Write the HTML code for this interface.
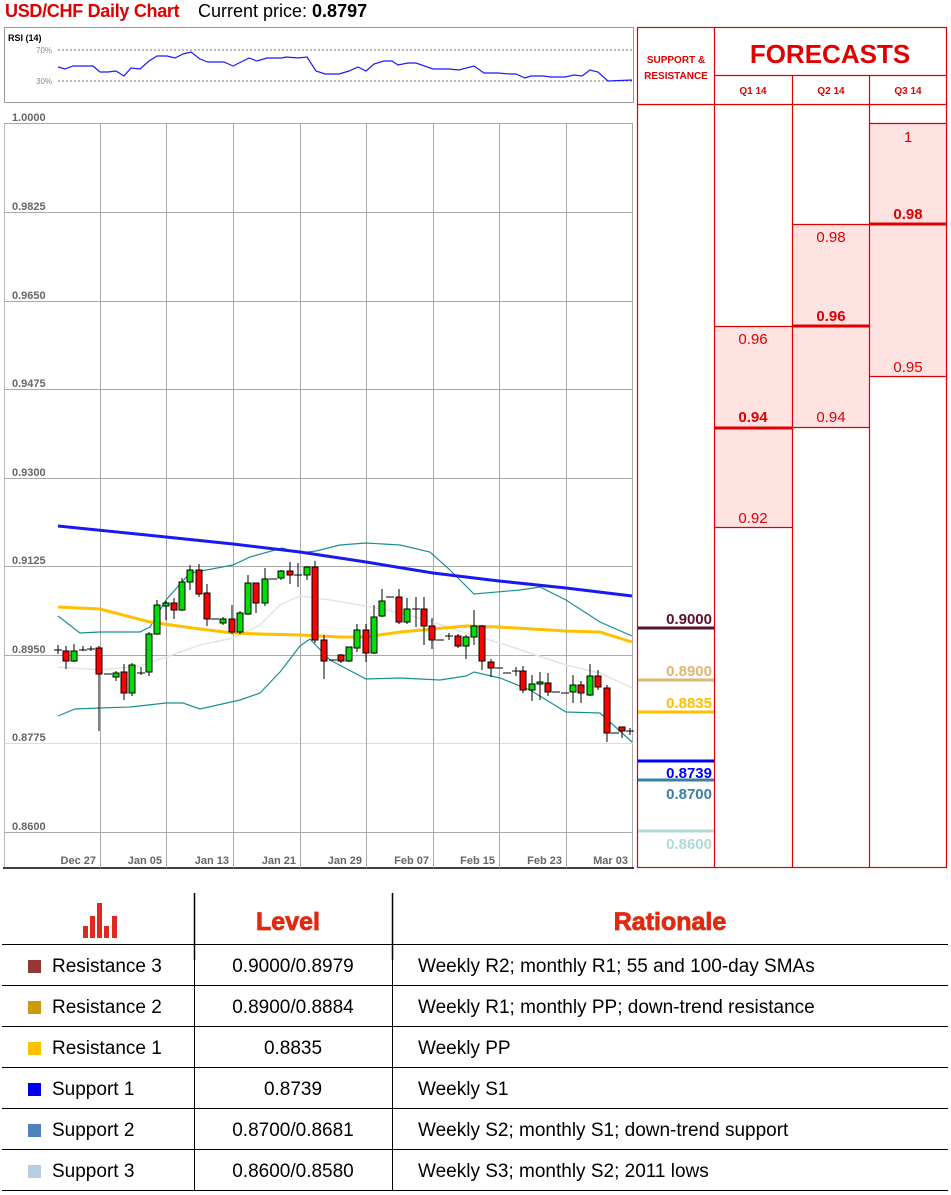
<!DOCTYPE html>
<html><head><meta charset="utf-8"><style>
*{margin:0;padding:0;box-sizing:border-box}
body{width:951px;height:1195px;background:#fff;position:relative;overflow:hidden;font-family:"Liberation Sans",sans-serif}
.a{position:absolute}
.row{position:absolute;left:2px;width:946px;height:41px;border-bottom:1.5px solid #000;font-size:19px;color:#000}
.row div{position:absolute;top:11px}
.sq{width:13px;height:13px;left:26px;top:15px!important}
</style></head><body>
<div class="a" style="left:5px;top:1px;font-size:18px;font-weight:bold;color:#e00000;letter-spacing:-0.3px">USD/CHF Daily Chart</div>
<div class="a" style="left:198px;top:1px;font-size:18px;color:#000">Current price: <b>0.8797</b></div>

<svg class="a" style="left:0;top:0" width="951" height="870">
<rect x="4.5" y="27.5" width="629" height="75" fill="none" stroke="#999"/>
<text x="8" y="41" font-size="9" font-weight="bold" fill="#000" font-family="Liberation Sans">RSI (14)</text>
<line x1="58" y1="50" x2="633" y2="50" stroke="#777" stroke-dasharray="2,2"/>
<line x1="58" y1="81" x2="633" y2="81" stroke="#777" stroke-dasharray="2,2"/>
<text x="36" y="53" font-size="8" fill="#888">70%</text>
<text x="36" y="84" font-size="8" fill="#888">30%</text>
<polyline fill="none" stroke="#1a1aff" stroke-width="1.2" points="58,67 65,69 73,66 93,66 100,72 108,72 116,71 124,76 131,68 140,69 149,61 157,56 167,56 175,58 183,54 191,52 200,59 208,62 224,62 233,66 241,62 249,58 257,61 267,58 282,58 286,57 298,58 307,57 316,71 325,74 339,74 349,71 358,67 366,71 374,64 384,61 392,61 398,65 408,63 416,63 433,69 445,69 449,69 459,70 474,66 484,73 498,73 510,74 516,74 525,78 531,76 543,76 551,77 565,77 574,75 582,76 590,70 598,72 608,81 632,80"/>
<line x1="4.5" y1="123" x2="4.5" y2="868" stroke="#bbb"/>
<line x1="632.5" y1="123" x2="632.5" y2="868" stroke="#aaa"/>
<line x1="3" y1="868" x2="634" y2="868" stroke="#000" stroke-width="1.5"/>
<g stroke="#aaa" stroke-width="1">
<line x1="4" y1="123.5" x2="633" y2="123.5"/><line x1="4" y1="212.5" x2="633" y2="212.5"/><line x1="4" y1="301.5" x2="633" y2="301.5"/><line x1="4" y1="389.5" x2="633" y2="389.5"/><line x1="4" y1="478.5" x2="633" y2="478.5"/><line x1="4" y1="566.5" x2="633" y2="566.5"/><line x1="4" y1="655.5" x2="633" y2="655.5"/><line x1="4" y1="743.5" x2="633" y2="743.5" stroke="#ddd"/><line x1="4" y1="832.5" x2="633" y2="832.5"/>
<line x1="100.5" y1="123" x2="100.5" y2="868"/><line x1="166.5" y1="123" x2="166.5" y2="868"/><line x1="233.5" y1="123" x2="233.5" y2="868"/><line x1="300.5" y1="123" x2="300.5" y2="868"/><line x1="366.5" y1="123" x2="366.5" y2="868"/><line x1="433.5" y1="123" x2="433.5" y2="868"/><line x1="499.5" y1="123" x2="499.5" y2="868"/><line x1="566.5" y1="123" x2="566.5" y2="868"/>
</g>
<g font-size="11" font-weight="bold" fill="#666" font-family="Liberation Sans">
<text x="12" y="121">1.0000</text><text x="12" y="210">0.9825</text><text x="12" y="299">0.9650</text><text x="12" y="387">0.9475</text><text x="12" y="476">0.9300</text><text x="12" y="564">0.9125</text><text x="12" y="653">0.8950</text><text x="12" y="741">0.8775</text><text x="12" y="830">0.8600</text>
</g>
<g font-size="11" font-weight="bold" fill="#666" font-family="Liberation Sans" text-anchor="end">
<text x="96" y="864">Dec 27</text><text x="162" y="864">Jan 05</text><text x="229" y="864">Jan 13</text><text x="296" y="864">Jan 21</text><text x="362" y="864">Jan 29</text><text x="429" y="864">Feb 07</text><text x="495" y="864">Feb 15</text><text x="562" y="864">Feb 23</text><text x="628" y="864">Mar 03</text>
</g>
<polyline fill="none" stroke="#e4e4e4" stroke-width="1.5" points="58,667 100,670 140,666 166,657 200,645 233,638 260,625 280,605 300,596 330,600 366,606 400,613 433,622 466,633 500,643 533,654 566,665 600,673 632,688"/>
<polyline fill="none" stroke="#1a9090" stroke-width="1.2" points="58,616 80,633 100,632 140,632 150,627 166,600 190,573 233,565 250,557 282,548 300,553 316,551 340,545 366,543 400,545 430,552 450,570 474,594 520,590 540,587 566,600 600,622 632,636"/>
<polyline fill="none" stroke="#1a9090" stroke-width="1.2" points="58,716 75,709 100,708 130,707 166,703 183,703 200,709 240,700 260,693 280,672 300,646 310,639 330,660 366,679 400,678 440,680 466,676 474,672 500,678 530,690 566,712 600,713 632,742"/>
<polyline fill="none" stroke="#ffc000" stroke-width="3" points="58,607 100,609 150,622 200,629 233,633 260,634 300,635 340,637 366,637 400,632 433,629 466,626 499,627 566,631 600,632 632,642"/>
<polyline fill="none" stroke="#1a1aee" stroke-width="3" points="58,526 166,537 233,544 300,552 366,562 433,573 499,581 566,588 632,596"/>
<g stroke="#000" stroke-width="1">
<line x1="58" y1="645" x2="58" y2="654"/><line x1="54" y1="650" x2="62" y2="650"/>
<line x1="66" y1="646" x2="66" y2="669"/><rect x="63" y="651" width="6" height="10" fill="#f00"/>
<line x1="74" y1="644" x2="74" y2="662"/><rect x="71" y="651" width="6" height="10" fill="#0d0"/>
<line x1="83" y1="646" x2="83" y2="651"/><line x1="79" y1="650" x2="87" y2="650"/>
<line x1="91" y1="646" x2="91" y2="651"/><line x1="87" y1="649" x2="95" y2="649"/>
<line x1="99" y1="646" x2="99" y2="731"/><rect x="96" y="648" width="6" height="26" fill="#f00"/>
<line x1="104" y1="674" x2="112" y2="674"/>
<line x1="116" y1="671" x2="116" y2="681"/><rect x="113" y="673" width="6" height="4" fill="#0d0"/>
<line x1="124" y1="664" x2="124" y2="700"/><rect x="121" y="672" width="6" height="21" fill="#f00"/>
<line x1="132" y1="663" x2="132" y2="696"/><rect x="129" y="665" width="6" height="28" fill="#0d0"/>
<line x1="141" y1="667" x2="141" y2="675"/><line x1="137" y1="673" x2="145" y2="673"/>
<line x1="149" y1="632" x2="149" y2="676"/><rect x="146" y="634" width="6" height="38" fill="#0d0"/>
<line x1="157" y1="600" x2="157" y2="635"/><rect x="154" y="605" width="6" height="29" fill="#0d0"/>
<line x1="166" y1="601" x2="166" y2="620"/><rect x="163" y="603" width="6" height="3" fill="#0d0"/>
<line x1="174" y1="598" x2="174" y2="619"/><rect x="171" y="603" width="6" height="7" fill="#f00"/>
<line x1="182" y1="578" x2="182" y2="611"/><rect x="179" y="582" width="6" height="28" fill="#0d0"/>
<line x1="190" y1="565" x2="190" y2="590"/><rect x="187" y="570" width="6" height="12" fill="#0d0"/>
<line x1="199" y1="564" x2="199" y2="597"/><rect x="196" y="570" width="6" height="24" fill="#f00"/>
<line x1="207" y1="584" x2="207" y2="626"/><rect x="204" y="593" width="6" height="26" fill="#f00"/>
<line x1="211" y1="619" x2="219" y2="619"/>
<line x1="223" y1="617" x2="223" y2="625"/><rect x="220" y="619" width="6" height="4" fill="#0d0"/>
<line x1="232" y1="605" x2="232" y2="634"/><rect x="229" y="619" width="6" height="13" fill="#f00"/>
<line x1="240" y1="611" x2="240" y2="634"/><rect x="237" y="613" width="6" height="19" fill="#0d0"/>
<line x1="248" y1="575" x2="248" y2="615"/><rect x="245" y="583" width="6" height="31" fill="#0d0"/>
<line x1="256" y1="583" x2="256" y2="613"/><rect x="253" y="583" width="6" height="20" fill="#f00"/>
<line x1="265" y1="568" x2="265" y2="606"/><rect x="262" y="579" width="6" height="24" fill="#0d0"/>
<line x1="269" y1="579" x2="277" y2="579"/>
<line x1="281" y1="570" x2="281" y2="580"/><rect x="278" y="571" width="6" height="7" fill="#0d0"/>
<line x1="290" y1="562" x2="290" y2="584"/><rect x="287" y="571" width="6" height="4" fill="#f00"/>
<line x1="298" y1="563" x2="298" y2="587"/><line x1="294" y1="575" x2="302" y2="575"/>
<line x1="307" y1="566" x2="307" y2="580"/><rect x="304" y="567" width="6" height="8" fill="#0d0"/>
<line x1="315" y1="561" x2="315" y2="643"/><rect x="312" y="567" width="6" height="73" fill="#f00"/>
<line x1="324" y1="635" x2="324" y2="679"/><rect x="321" y="640" width="6" height="21" fill="#f00"/>
<line x1="329" y1="660" x2="337" y2="660"/>
<line x1="341" y1="654" x2="341" y2="663"/><rect x="338" y="655" width="6" height="6" fill="#f00"/>
<line x1="349" y1="647" x2="349" y2="662"/><rect x="346" y="647" width="6" height="14" fill="#0d0"/>
<line x1="357" y1="624" x2="357" y2="652"/><rect x="354" y="630" width="6" height="18" fill="#0d0"/>
<line x1="366" y1="624" x2="366" y2="662"/><rect x="363" y="630" width="6" height="23" fill="#f00"/>
<line x1="374" y1="605" x2="374" y2="654"/><rect x="371" y="617" width="6" height="36" fill="#0d0"/>
<line x1="382" y1="589" x2="382" y2="617"/><rect x="379" y="601" width="6" height="15" fill="#0d0"/>
<line x1="386" y1="597" x2="394" y2="597"/>
<line x1="399" y1="589" x2="399" y2="624"/><rect x="396" y="597" width="6" height="25" fill="#f00"/>
<line x1="407" y1="598" x2="407" y2="624"/><rect x="404" y="609" width="6" height="13" fill="#0d0"/>
<line x1="416" y1="597" x2="416" y2="627"/><line x1="412" y1="609" x2="420" y2="609"/>
<line x1="424" y1="597" x2="424" y2="645"/><rect x="421" y="609" width="6" height="17" fill="#f00"/>
<line x1="432" y1="618" x2="432" y2="649"/><rect x="429" y="626" width="6" height="14" fill="#f00"/>
<line x1="436" y1="640" x2="444" y2="640"/>
<line x1="449" y1="633" x2="449" y2="640"/><line x1="445" y1="636" x2="453" y2="636"/>
<line x1="458" y1="634" x2="458" y2="648"/><rect x="455" y="636" width="6" height="10" fill="#f00"/>
<line x1="466" y1="635" x2="466" y2="659"/><rect x="463" y="637" width="6" height="9" fill="#0d0"/>
<line x1="474" y1="610" x2="474" y2="645"/><rect x="471" y="626" width="6" height="11" fill="#0d0"/>
<line x1="482" y1="625" x2="482" y2="670"/><rect x="479" y="626" width="6" height="35" fill="#f00"/>
<line x1="491" y1="659" x2="491" y2="677"/><rect x="488" y="662" width="6" height="6" fill="#f00"/>
<line x1="495" y1="668" x2="503" y2="668"/>
<line x1="503" y1="673" x2="511" y2="673"/>
<line x1="516" y1="667" x2="516" y2="676"/><line x1="512" y1="671" x2="520" y2="671"/>
<line x1="523" y1="666" x2="523" y2="693"/><rect x="520" y="671" width="6" height="19" fill="#f00"/>
<line x1="532" y1="675" x2="532" y2="701"/><rect x="529" y="684" width="6" height="6" fill="#0d0"/>
<line x1="540" y1="672" x2="540" y2="700"/><rect x="537" y="682" width="6" height="2" fill="#0d0"/>
<line x1="548" y1="673" x2="548" y2="696"/><rect x="545" y="683" width="6" height="9" fill="#f00"/>
<line x1="552" y1="692" x2="560" y2="692"/>
<line x1="561" y1="693" x2="569" y2="693"/>
<line x1="573" y1="675" x2="573" y2="703"/><rect x="570" y="685" width="6" height="7" fill="#0d0"/>
<line x1="581" y1="681" x2="581" y2="703"/><rect x="578" y="685" width="6" height="8" fill="#f00"/>
<line x1="590" y1="664" x2="590" y2="696"/><rect x="587" y="676" width="6" height="19" fill="#0d0"/>
<line x1="598" y1="670" x2="598" y2="690"/><rect x="595" y="676" width="6" height="11" fill="#f00"/>
<line x1="607" y1="685" x2="607" y2="742"/><rect x="604" y="688" width="6" height="45" fill="#f00"/>
<line x1="611" y1="733" x2="619" y2="733"/>
<line x1="622" y1="727" x2="622" y2="738"/><rect x="619" y="727" width="6" height="4" fill="#f00"/>
<line x1="630" y1="728" x2="630" y2="735"/><line x1="626" y1="731" x2="634" y2="731"/>
</g>

<rect x="715" y="326" width="77" height="201" fill="#ffe3e3"/>
<rect x="793" y="224" width="76" height="203" fill="#ffe3e3"/>
<rect x="870" y="123" width="76" height="253" fill="#ffe3e3"/>
<g stroke="#e00000" stroke-width="1.2" fill="none">
<rect x="637.5" y="27.5" width="309" height="840"/>
<line x1="714.5" y1="27" x2="714.5" y2="868"/>
<line x1="714" y1="75.5" x2="947" y2="75.5"/>
<line x1="637" y1="104.5" x2="947" y2="104.5"/>
<line x1="792.5" y1="75" x2="792.5" y2="868"/>
<line x1="869.5" y1="75" x2="869.5" y2="868"/>
<line x1="715" y1="326.5" x2="792" y2="326.5"/><line x1="715" y1="527.5" x2="792" y2="527.5"/>
<line x1="793" y1="224.5" x2="869" y2="224.5"/><line x1="793" y1="427.5" x2="869" y2="427.5"/>
<line x1="870" y1="123.5" x2="946" y2="123.5"/><line x1="870" y1="376.5" x2="946" y2="376.5"/>
</g>
<g stroke="#e00000" stroke-width="3">
<line x1="715" y1="428" x2="792" y2="428"/>
<line x1="793" y1="326" x2="869" y2="326"/>
<line x1="870" y1="224" x2="946" y2="224"/>
</g>
<g fill="#e00000" font-family="Liberation Sans" text-anchor="middle">
<text x="830" y="63" font-size="26" font-weight="bold">FORECASTS</text>
<text x="676" y="63" font-size="10" font-weight="bold">SUPPORT &amp;</text>
<text x="676" y="79" font-size="10" font-weight="bold">RESISTANCE</text>
<text x="753" y="94" font-size="10" font-weight="bold">Q1 14</text>
<text x="831" y="94" font-size="10" font-weight="bold">Q2 14</text>
<text x="908" y="94" font-size="10" font-weight="bold">Q3 14</text>
<g font-size="15">
<text x="908" y="142">1</text><text x="908" y="372">0.95</text>
<text x="831" y="242">0.98</text><text x="831" y="422">0.94</text>
<text x="753" y="344">0.96</text><text x="753" y="523">0.92</text>
</g>
<g font-size="15" font-weight="bold">
<text x="908" y="219">0.98</text><text x="831" y="321">0.96</text><text x="753" y="422">0.94</text>
</g>
</g>
<g stroke-width="3">
<line x1="638" y1="628" x2="714" y2="628" stroke="#5a1030"/>
<line x1="638" y1="680" x2="714" y2="680" stroke="#dcb870"/>
<line x1="638" y1="712" x2="714" y2="712" stroke="#ffc000"/>
<line x1="638" y1="761" x2="714" y2="761" stroke="#0000ff"/>
<line x1="638" y1="780" x2="714" y2="780" stroke="#3d7ea6"/>
<line x1="638" y1="831" x2="714" y2="831" stroke="#b0dada"/>
</g>
<g font-size="15" font-weight="bold" font-family="Liberation Sans" text-anchor="end">
<text x="712" y="624" fill="#5a1030">0.9000</text>
<text x="712" y="676" fill="#dcb870">0.8900</text>
<text x="712" y="708" fill="#ffc000">0.8835</text>
<text x="712" y="778" fill="#0000ff">0.8739</text>
<text x="712" y="799" fill="#3d7ea6">0.8700</text>
<text x="712" y="849" fill="#b0dada">0.8600</text>
</g>
</svg>

<svg class="a" style="left:0;top:880" width="951" height="80">
<g fill="#e02a20">
<rect x="83" y="46" width="5" height="12"/><rect x="90" y="36" width="5" height="22"/><rect x="97" y="23" width="5" height="35"/><rect x="104" y="46" width="5" height="12"/><rect x="112" y="36" width="5" height="22"/>
</g>
<line x1="194.5" y1="13" x2="194.5" y2="80" stroke="#000" stroke-width="1.5"/>
<line x1="392.5" y1="13" x2="392.5" y2="80" stroke="#000" stroke-width="1.5"/>
<text x="288" y="50" text-anchor="middle" font-size="25" font-weight="900" fill="#e02a10" font-family="Liberation Sans" stroke="#e02a10" stroke-width="0.8">Level</text>
<text x="670" y="50" text-anchor="middle" font-size="25" font-weight="900" fill="#e02a10" font-family="Liberation Sans" stroke="#e02a10" stroke-width="0.8">Rationale</text>
</svg>
<div class="a" style="left:2px;top:944px;width:946px;border-top:1.5px solid #000"></div>
<div class="a" style="left:194px;top:944px;height:247px;border-left:1.5px solid #000"></div>
<div class="a" style="left:392px;top:944px;height:247px;border-left:1.5px solid #000"></div>

<div class="row" style="top:945px"><div class="sq" style="background:#953735"></div><div style="left:50px">Resistance 3</div><div style="left:192px;width:198px;text-align:center">0.9000/0.8979</div><div style="left:416px">Weekly R2; monthly R1; 55 and 100-day SMAs</div></div>
<div class="row" style="top:986px"><div class="sq" style="background:#cc9a06"></div><div style="left:50px">Resistance 2</div><div style="left:192px;width:198px;text-align:center">0.8900/0.8884</div><div style="left:416px">Weekly R1; monthly PP; down-trend resistance</div></div>
<div class="row" style="top:1027px"><div class="sq" style="background:#ffc000"></div><div style="left:50px">Resistance 1</div><div style="left:192px;width:198px;text-align:center">0.8835</div><div style="left:416px">Weekly PP</div></div>
<div class="row" style="top:1068px"><div class="sq" style="background:#0000ee"></div><div style="left:50px">Support 1</div><div style="left:192px;width:198px;text-align:center">0.8739</div><div style="left:416px">Weekly S1</div></div>
<div class="row" style="top:1109px"><div class="sq" style="background:#4f81bd"></div><div style="left:50px">Support 2</div><div style="left:192px;width:198px;text-align:center">0.8700/0.8681</div><div style="left:416px">Weekly S2; monthly S1; down-trend support</div></div>
<div class="row" style="top:1150px"><div class="sq" style="background:#b8cce4"></div><div style="left:50px">Support 3</div><div style="left:192px;width:198px;text-align:center">0.8600/0.8580</div><div style="left:416px">Weekly S3; monthly S2; 2011 lows</div></div>
</body></html>
